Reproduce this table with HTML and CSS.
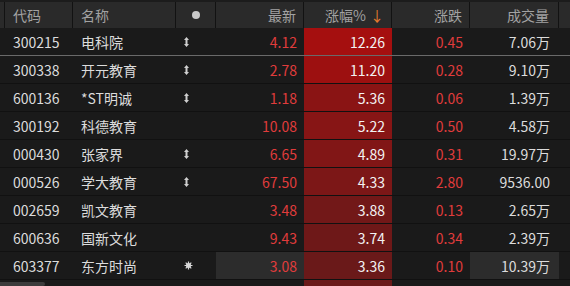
FILE: index.html
```html
<!DOCTYPE html>
<html lang="zh">
<head>
<meta charset="utf-8">
<title>行情</title>
<link rel="stylesheet" href="styles.css">
</head>
<body>
<div class="board">
  <div class="row head">
    <div class="c stub"></div>
    <div class="c l">代码</div>
    <div class="c l">名称</div>
    <div class="c ctr"><span class="dot"></span></div>
    <div class="c r">最新</div>
    <div class="c r">涨幅%<span class="arrow">↓</span></div>
    <div class="c r">涨跌</div>
    <div class="c r">成交量</div>
    <div class="c end"></div>
  </div>

  <div class="row sel">
    <div class="c stub"></div>
    <div class="c l">300215</div>
    <div class="c l">电科院</div>
    <div class="c ic"><svg class="ud" width="5" height="10" viewBox="0 0 5 10"><path d="M2.5 0 L5 3 L3.5 3 L3.5 7 L5 7 L2.5 10 L0 7 L1.5 7 L1.5 3 L0 3 Z"/></svg></div>
    <div class="c r up">4.12</div>
    <div class="c r pct h1">12.26</div>
    <div class="c r up">0.45</div>
    <div class="c r">7.06万</div>
    <div class="c end"></div>
  </div>

  <div class="row">
    <div class="c stub"></div>
    <div class="c l">300338</div>
    <div class="c l">开元教育</div>
    <div class="c ic"><svg class="ud" width="5" height="10" viewBox="0 0 5 10"><path d="M2.5 0 L5 3 L3.5 3 L3.5 7 L5 7 L2.5 10 L0 7 L1.5 7 L1.5 3 L0 3 Z"/></svg></div>
    <div class="c r up">2.78</div>
    <div class="c r pct h2">11.20</div>
    <div class="c r up">0.28</div>
    <div class="c r">9.10万</div>
    <div class="c end"></div>
  </div>

  <div class="row">
    <div class="c stub"></div>
    <div class="c l">600136</div>
    <div class="c l">*ST明诚</div>
    <div class="c ic"><svg class="ud" width="5" height="10" viewBox="0 0 5 10"><path d="M2.5 0 L5 3 L3.5 3 L3.5 7 L5 7 L2.5 10 L0 7 L1.5 7 L1.5 3 L0 3 Z"/></svg></div>
    <div class="c r up">1.18</div>
    <div class="c r pct h3">5.36</div>
    <div class="c r up">0.06</div>
    <div class="c r">1.39万</div>
    <div class="c end"></div>
  </div>

  <div class="row">
    <div class="c stub"></div>
    <div class="c l">300192</div>
    <div class="c l">科德教育</div>
    <div class="c ic"></div>
    <div class="c r up">10.08</div>
    <div class="c r pct h4">5.22</div>
    <div class="c r up">0.50</div>
    <div class="c r">4.58万</div>
    <div class="c end"></div>
  </div>

  <div class="row">
    <div class="c stub"></div>
    <div class="c l">000430</div>
    <div class="c l">张家界</div>
    <div class="c ic"><svg class="ud" width="5" height="10" viewBox="0 0 5 10"><path d="M2.5 0 L5 3 L3.5 3 L3.5 7 L5 7 L2.5 10 L0 7 L1.5 7 L1.5 3 L0 3 Z"/></svg></div>
    <div class="c r up">6.65</div>
    <div class="c r pct h5">4.89</div>
    <div class="c r up">0.31</div>
    <div class="c r">19.97万</div>
    <div class="c end"></div>
  </div>

  <div class="row">
    <div class="c stub"></div>
    <div class="c l">000526</div>
    <div class="c l">学大教育</div>
    <div class="c ic"><svg class="ud" width="5" height="10" viewBox="0 0 5 10"><path d="M2.5 0 L5 3 L3.5 3 L3.5 7 L5 7 L2.5 10 L0 7 L1.5 7 L1.5 3 L0 3 Z"/></svg></div>
    <div class="c r up">67.50</div>
    <div class="c r pct h6">4.33</div>
    <div class="c r up">2.80</div>
    <div class="c r">9536.00</div>
    <div class="c end"></div>
  </div>

  <div class="row">
    <div class="c stub"></div>
    <div class="c l">002659</div>
    <div class="c l">凯文教育</div>
    <div class="c ic"></div>
    <div class="c r up">3.48</div>
    <div class="c r pct h7">3.88</div>
    <div class="c r up">0.13</div>
    <div class="c r">2.65万</div>
    <div class="c end"></div>
  </div>

  <div class="row">
    <div class="c stub"></div>
    <div class="c l">600636</div>
    <div class="c l">国新文化</div>
    <div class="c ic"></div>
    <div class="c r up">9.43</div>
    <div class="c r pct h8">3.74</div>
    <div class="c r up">0.34</div>
    <div class="c r">2.39万</div>
    <div class="c end"></div>
  </div>

  <div class="row">
    <div class="c stub"></div>
    <div class="c l">603377</div>
    <div class="c l">东方时尚</div>
    <div class="c ic"><svg class="star" width="9" height="9" viewBox="0 0 9 9"><path d="M4.5 0.5 V8.5 M0.5 4.5 H8.5 M1.7 1.7 L7.3 7.3 M7.3 1.7 L1.7 7.3"/><circle cx="4.5" cy="4.5" r="2"/></svg></div>
    <div class="c r up hl">3.08</div>
    <div class="c r pct h9">3.36</div>
    <div class="c r up">0.10</div>
    <div class="c r hl">10.39万</div>
    <div class="c end"></div>
  </div>

  <div class="row">
    <div class="c stub"></div>
    <div class="c l"></div>
    <div class="c l"></div>
    <div class="c ic"></div>
    <div class="c r up"></div>
    <div class="c r pct h9"></div>
    <div class="c r up"></div>
    <div class="c r"></div>
    <div class="c end"></div>
  </div>

  <div class="scrollbar"></div>
</div>
</body>
</html>
```

FILE: styles.css
```css
html, body {
  margin: 0;
  padding: 0;
  background: #1a1a1a;
  overflow: hidden;
}
.board {
  position: relative;
  width: 570px;
  height: 286px;
  overflow: hidden;
  font-family: "Noto Sans CJK SC", "Microsoft YaHei", sans-serif;
  font-size: 14px;
  color: #dcdcdc;
  background: #1a1a1a;
}
.row {
  display: grid;
  grid-template-columns: 5px 68px 103px 40px 88px 88px 78px 89px 11px;
  height: 28px;
  box-sizing: border-box;
  border-bottom: 1px solid #111;
}
.c {
  display: flex;
  align-items: center;
  box-sizing: border-box;
  white-space: nowrap;
  overflow: hidden;
}
.l { justify-content: flex-start; padding-left: 8px; }
.r { justify-content: flex-end; padding-right: 7px; }
.ctr { justify-content: center; }
.ic { justify-content: flex-start; padding-left: 8px; }

.head {
  height: 28px;
  border-top: 2px solid #1c1c1c;
  border-bottom: none;
  background: #2a2a2a;
  color: #a2a2a2;
}
.head .c { border-right: 1px solid #121212; }
.head .c:last-child { border-right: none; }
.row .c:nth-child(8) { padding-right: 9px; }
.dot {
  width: 8px;
  height: 8px;
  border-radius: 50%;
  background: #c8c8c8;
}
.arrow {
  color: #e87b2e;
  margin-left: 4px;
}
.sel { border-bottom: 1px solid #6a6a6a; }

.up { color: #e03c3c; }
.pct { color: #f2f2f2; }
.h1 { background: #a50f0f; }
.h2 { background: #9d1010; }
.h3 { background: #8a1414; }
.h4 { background: #871515; }
.h5 { background: #811616; }
.h6 { background: #7c1717; }
.h7 { background: #721818; }
.h8 { background: #6e1818; }
.h9 { background: #6a1919; }
.hl { background: #2c2c2c; }

.ud { fill: #cfcfcf; }
.star { stroke: #d8d8d8; stroke-width: 1.2; fill: #d8d8d8; }

.scrollbar {
  position: absolute;
  left: 0;
  bottom: 0;
  width: 45px;
  height: 4px;
  border-radius: 0 2px 2px 0;
  background: #3c3c3c;
}
```
